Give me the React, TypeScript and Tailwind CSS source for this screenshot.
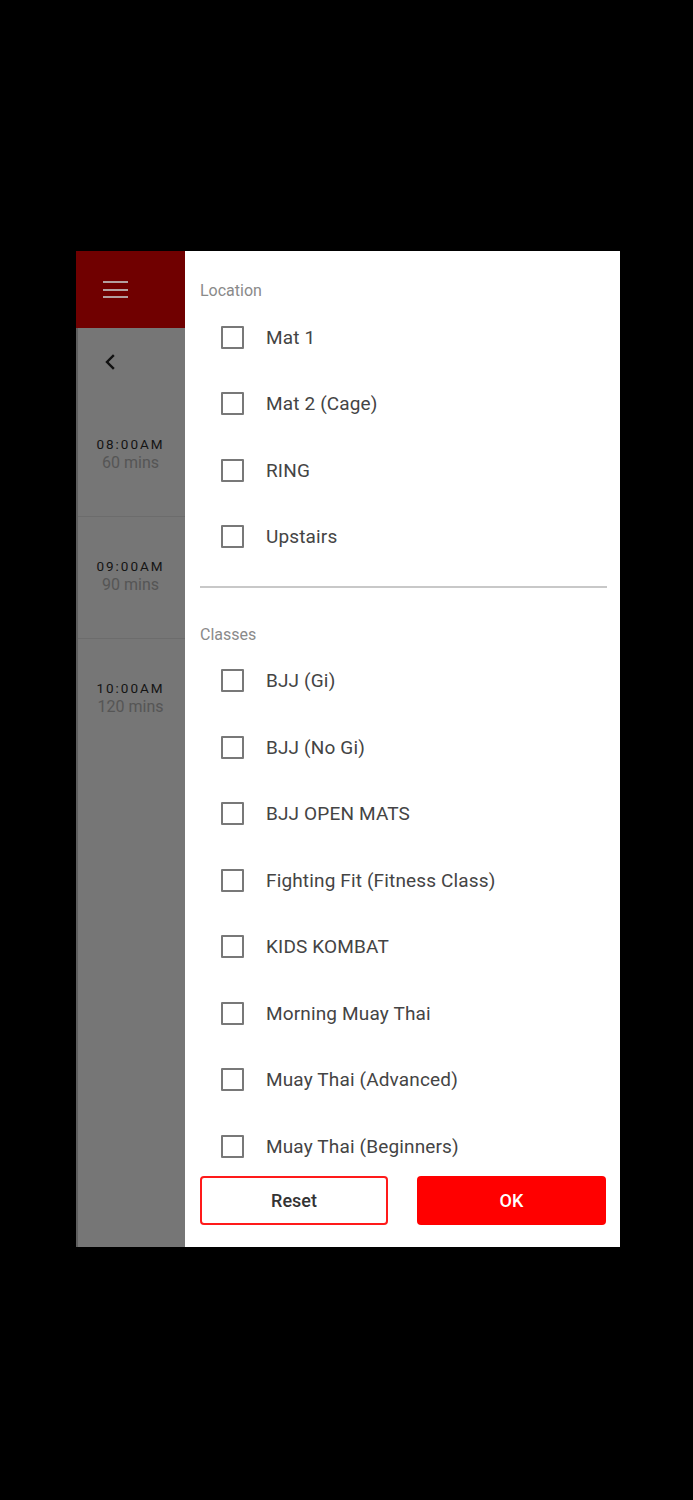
import React from 'react';

const locations = ['Mat 1', 'Mat 2 (Cage)', 'RING', 'Upstairs'];

const classes = [
  'BJJ (Gi)',
  'BJJ (No Gi)',
  'BJJ OPEN MATS',
  'Fighting Fit (Fitness Class)',
  'KIDS KOMBAT',
  'Morning Muay Thai',
  'Muay Thai (Advanced)',
  'Muay Thai (Beginners)',
];

const times = [
  { time: '08:00AM', length: '60 mins' },
  { time: '09:00AM', length: '90 mins' },
  { time: '10:00AM', length: '120 mins' },
];

function CheckRow({ label }: { label: string }) {
  return (
    <div className="h-[66.5px] flex items-center pl-[36px]">
      <div className="w-[23px] h-[23px] border-2 border-[#787878] rounded-[1px] shrink-0" />
      <span className="ml-[22px] text-[19px] tracking-[0.15px] text-[#444444] leading-none">{label}</span>
    </div>
  );
}

export default function App() {
  return (
    <div className="min-h-screen w-full bg-black pt-[251px] font-['Roboto',sans-serif]">
      <div className="ml-[76px] w-[544px] h-[996px] flex overflow-hidden">
        {/* Sidebar behind the filter drawer */}
        <aside className="w-[109px] shrink-0 bg-[#767676] border-l-2 border-[#5e5e5e] flex flex-col">
          <div className="h-[77px] -ml-[2px] bg-[#700000] flex items-center pl-[27px]">
            <div className="flex flex-col gap-[5.5px]">
              <div className="w-[25px] h-[2px] bg-[#b3a0a0]" />
              <div className="w-[25px] h-[2px] bg-[#b3a0a0]" />
              <div className="w-[25px] h-[2px] bg-[#b3a0a0]" />
            </div>
          </div>
          <div className="h-[67px] flex items-center pl-[26px]">
            <svg width="12" height="16" viewBox="0 0 12 16" fill="none">
              <path d="M9 2 L3 8 L9 14" stroke="#111" strokeWidth="2.4" strokeLinecap="square" />
            </svg>
          </div>
          {times.map((t, i) => (
            <div
              key={t.time}
              className={`h-[122px] flex flex-col items-center justify-center pb-[4px] pr-[2px] ${
                i < times.length - 1 ? 'border-b border-[#6c6c6c]' : ''
              }`}
            >
              <span className="text-[13.5px] tracking-[2px] text-[#141414] leading-[17px]">{t.time}</span>
              <span className="text-[16px] text-[#555555] leading-[19px]">{t.length}</span>
            </div>
          ))}
        </aside>

        {/* Filter panel */}
        <main className="flex-1 bg-white flex flex-col">
          <div className="flex-1 overflow-hidden">
            <div className="pt-[30px] pl-[15px] h-[53px] text-[16px] text-[#8a8a8a] leading-[20px]">
              Location
            </div>
            {locations.map((l) => (
              <CheckRow key={l} label={l} />
            ))}
            <div className="mt-[16px] ml-[15px] mr-[13px] h-[1.5px] bg-[#c8c8c8]" />
            <div className="pt-[37px] pl-[15px] h-[60px] text-[16px] text-[#8a8a8a] leading-[20px]">
              Classes
            </div>
            {classes.map((c) => (
              <CheckRow key={c} label={c} />
            ))}
          </div>
          <div className="flex justify-between pl-[15px] pr-[14px] pt-[8px] pb-[22px] bg-white">
            <button className="w-[188px] h-[49px] border-2 border-[#ff1a1a] rounded-[4px] text-[18px] font-medium text-[#333333]">
              Reset
            </button>
            <button className="w-[189px] h-[49px] bg-[#ff0000] rounded-[4px] text-[18px] font-medium text-white">
              OK
            </button>
          </div>
        </main>
      </div>
    </div>
  );
}
